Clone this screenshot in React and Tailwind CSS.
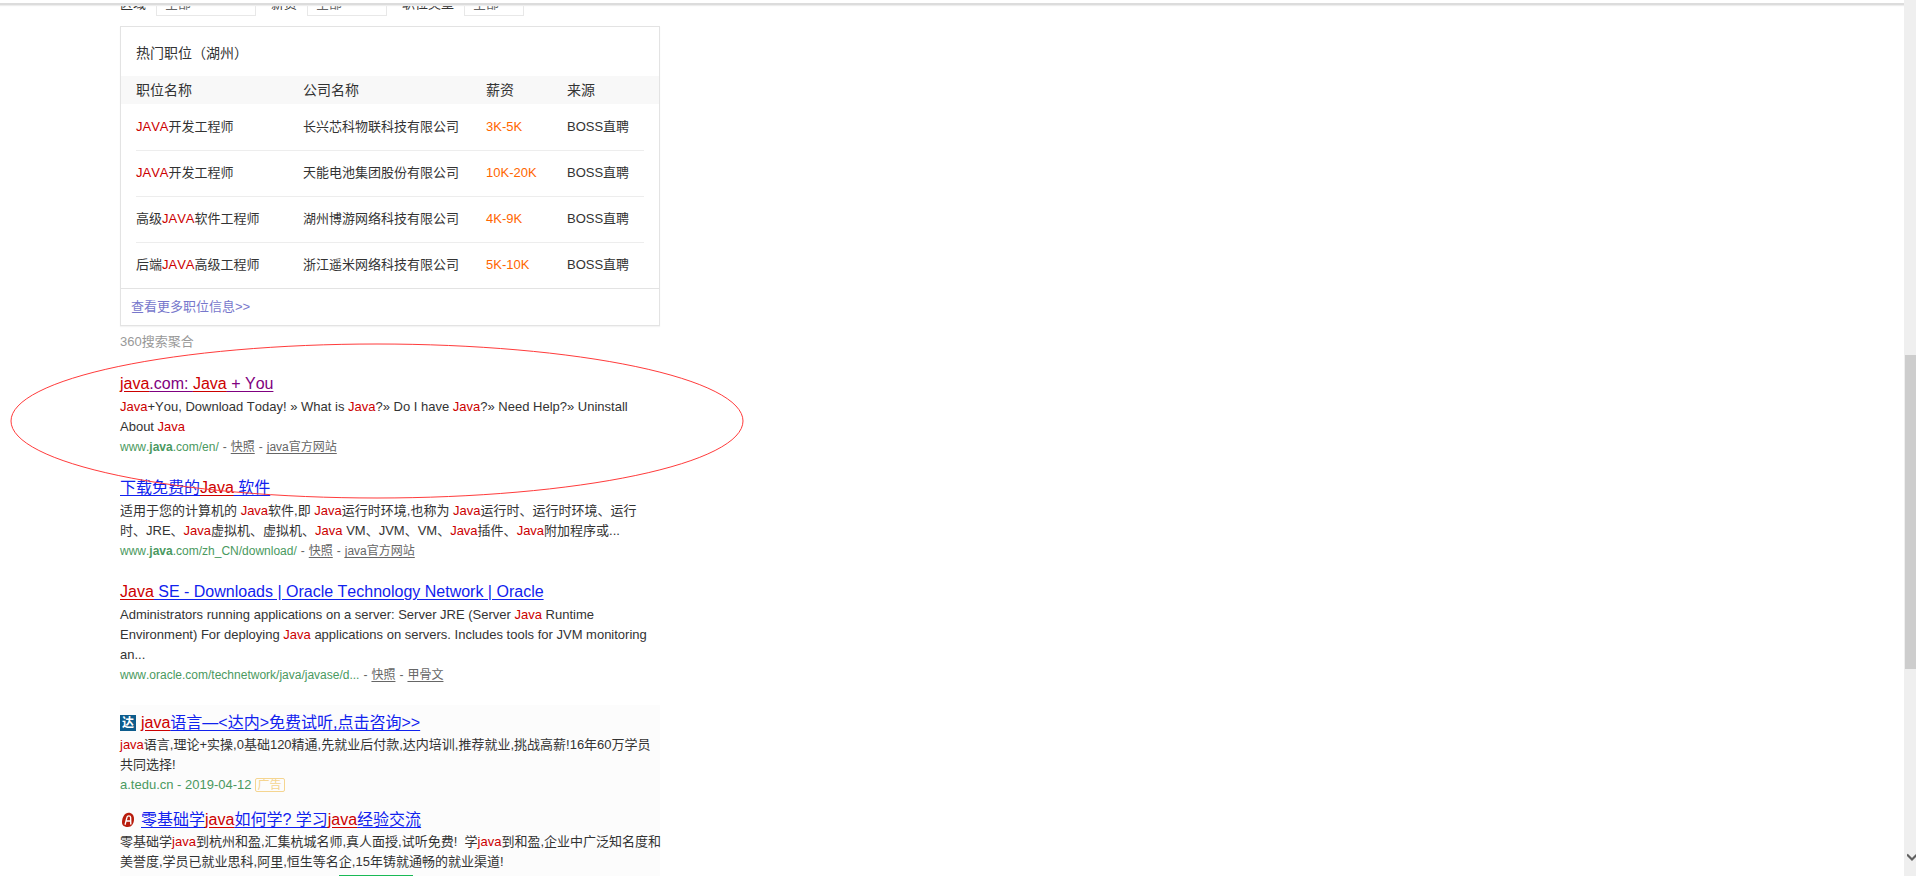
const JOBS = [
  { title: ['', 'JAVA', '开发工程师'], company: '长兴芯科物联科技有限公司', salary: '3K-5K' },
  { title: ['', 'JAVA', '开发工程师'], company: '天能电池集团股份有限公司', salary: '10K-20K' },
  { title: ['高级', 'JAVA', '软件工程师'], company: '湖州博游网络科技有限公司', salary: '4K-9K' },
  { title: ['后端', 'JAVA', '高级工程师'], company: '浙江遥米网络科技有限公司', salary: '5K-10K' },
];

function Hit({ children }) {
  return <em className="text-[#cc0000] not-italic">{children}</em>;
}

function TitleHit({ children }) {
  return <em className="text-[#cc0000] not-italic underline underline-offset-2">{children}</em>;
}

function Filter({ id, label, width, gap }) {
  return (
    <div className={`flex items-center ${gap}`}>
      <label htmlFor={id} className="shrink-0 pr-2.5">{label}</label>
      <div className={`relative ${width}`}>
        <select
          id={id}
          className="block h-6 w-full appearance-none border border-[#e8e8e8] bg-white pl-2 leading-5 text-[#666] outline-none"
        >
          <option>全部</option>
        </select>
        <svg className="pointer-events-none absolute top-2.5 right-2" width="6" height="4" viewBox="0 0 6 4" aria-hidden="true">
          <path d="M0 0h6L3 4z" fill="#b5b5b5" />
        </svg>
      </div>
    </div>
  );
}

function JobCard() {
  return (
    <section className="mt-2.5 border border-[#e3e3e3] shadow-[0_1px_1px_#f4f4f4]">
      <h2 className="h-[49px] pt-1 pl-[15px] text-sm leading-11">热门职位（湖州）</h2>
      <table className="w-full table-fixed border-collapse text-left">
        <colgroup>
          <col className="w-[15px]" />
          <col className="w-[167px]" />
          <col className="w-[183px]" />
          <col className="w-[81px]" />
          <col />
          <col className="w-[15px]" />
        </colgroup>
        <thead>
          <tr className="h-7 bg-[#f8f8f8] text-sm">
            <td />
            <th className="font-normal">职位名称</th>
            <th className="font-normal">公司名称</th>
            <th className="font-normal">薪资</th>
            <th className="font-normal">来源</th>
            <td />
          </tr>
        </thead>
        <tbody>
          {JOBS.map((job, i) => {
            const line = i < JOBS.length - 1 ? 'border-b border-[#ededed]' : '';
            return (
              <tr key={job.company} className="h-[46px]">
                <td />
                <td className={line}>
                  {job.title[0]}
                  <Hit>{job.title[1]}</Hit>
                  {job.title[2]}
                </td>
                <td className={line}>{job.company}</td>
                <td className={`text-[#ff6600] ${line}`}>{job.salary}</td>
                <td className={line}>BOSS直聘</td>
                <td />
              </tr>
            );
          })}
        </tbody>
      </table>
      <div className="border-t border-[#e3e3e3] pl-2.5 leading-9">
        <a href="#more" className="text-[#7777cc]">查看更多职位信息&gt;&gt;</a>
      </div>
    </section>
  );
}

function Result({ visited, title, children, url, site }) {
  return (
    <article className="mb-5">
      <h3 className="pb-0.5 text-base leading-[22px]">
        <a
          href="#result"
          className={`underline underline-offset-2 ${visited ? 'text-[#800080]' : 'text-[#1122ee]'}`}
        >
          {title}
        </a>
      </h3>
      <p>{children}</p>
      <p className="flex gap-1 text-xs leading-5 text-[#666]">
        <cite className="text-[#4a9960] not-italic">{url}</cite>
        <span>-</span>
        <a href="#cache" className="underline underline-offset-2">快照</a>
        <span>-</span>
        <a href="#site" className="underline underline-offset-2">{site}</a>
      </p>
    </article>
  );
}

function TeduLogo() {
  return (
    <span className="flex size-4 shrink-0 items-center justify-center bg-[#0d5c8c] text-xs leading-4 font-bold text-white">
      达
    </span>
  );
}

function AcademyLogo() {
  return (
    <svg className="size-4 shrink-0" viewBox="0 0 16 16" aria-hidden="true">
      <path d="M8.5 .8C12 .8 14 3.3 14 7c0 4.600-2.400 8-6.200 8C4.500 15 2 13.700 2 10.300 2 5 5 .8 8.500 .8z" fill="#b81c0c" />
      <path d="M5.200 12.200L7 5.200c.4-1.800 3.500-1.800 3.600 0l.2 6.800M6 9h4.600" fill="none" stroke="#fff" strokeWidth="1.400" strokeLinecap="round" />
    </svg>
  );
}

function Ad({ icon, title, children }) {
  return (
    <article className="mb-[13px]">
      <h3 className="flex items-center gap-[5px] text-base leading-6">
        {icon}
        <a href="#ad" className="text-[#1122ee] underline underline-offset-2">{title}</a>
      </h3>
      {children}
    </article>
  );
}

function Scrollbar() {
  return (
    <div className="relative flex w-3 shrink-0 flex-col overflow-hidden bg-[#efefef] pl-px" aria-hidden="true">
      <div className="grow-[355]" />
      <div className="grow-[314] bg-[#cdcdcd]" />
      <div className="grow-[207]" />
      <svg className="absolute bottom-3.5 left-[3px]" width="10" height="9" viewBox="0 0 10 9">
        <path d="M0 1.500L5 6.500L10 1.500" fill="none" stroke="#606060" strokeWidth="2.200" />
      </svg>
    </div>
  );
}

export default function App() {
  return (
    <div className="flex h-screen overflow-hidden bg-white font-['Liberation_Sans','Noto_Sans_CJK_SC',sans-serif] text-[13px] leading-5 text-[#333] [font-kerning:none]">
      <div className="relative min-w-0 flex-1 overflow-hidden">
        <header className="relative z-10 h-[5px] border-b-2 border-[#dcdcdc] bg-white shadow-[0_1px_1px_#ededed]" />
        <main className="ml-[120px] w-[540px]">
          <form className="-mt-[13px] flex h-6">
            <Filter id="area" label="区域" width="w-[100px]" gap="" />
            <Filter id="salary" label="薪资" width="w-[80px]" gap="ml-[15px]" />
            <Filter id="type" label="职位类型" width="w-[60px]" gap="ml-[15px]" />
          </form>
          <JobCard />
          <p className="mt-1.5 mb-[21px] text-[#999]">360搜索聚合</p>

          <Result
            visited
            title={<><TitleHit>java</TitleHit>.com: <TitleHit>Java</TitleHit> + You</>}
            url={<>www.<b>java</b>.com/en/</>}
            site="java官方网站"
          >
            <Hit>Java</Hit>+You, Download Today! » What is <Hit>Java</Hit>?» Do I have <Hit>Java</Hit>?» Need Help?» Uninstall
            <br />
            About <Hit>Java</Hit>
          </Result>

          <Result
            title={<>下载免费的<TitleHit>Java</TitleHit> 软件</>}
            url={<>www.<b>java</b>.com/zh_CN/download/</>}
            site="java官方网站"
          >
            适用于您的计算机的 <Hit>Java</Hit>软件,即 <Hit>Java</Hit>运行时环境,也称为 <Hit>Java</Hit>运行时、运行时环境、运行
            <br />
            时、JRE、<Hit>Java</Hit>虚拟机、虚拟机、<Hit>Java</Hit> VM、JVM、VM、<Hit>Java</Hit>插件、<Hit>Java</Hit>附加程序或...
          </Result>

          <Result
            title={<><TitleHit>Java</TitleHit> SE - Downloads | Oracle Technology Network | Oracle</>}
            url="www.oracle.com/technetwork/java/javase/d..."
            site="甲骨文"
          >
            Administrators running applications on a server: Server JRE (Server <Hit>Java</Hit> Runtime
            <br />
            Environment) For deploying <Hit>Java</Hit> applications on servers. Includes tools for JVM monitoring
            <br />
            an...
          </Result>

          <section className="bg-[#fcfcfc] pt-1.5 whitespace-nowrap">
            <Ad
              icon={<TeduLogo />}
              title={<><TitleHit>java</TitleHit>语言—&lt;达内&gt;免费试听,点击咨询&gt;&gt;</>}
            >
              <p>
                <Hit>java</Hit>语言,理论+实操,0基础120精通,先就业后付款,达内培训,推荐就业,挑战高薪!16年60万学员
                <br />
                共同选择!
              </p>
              <p className="flex items-center gap-[3px] text-[#4a9960]">
                a.tedu.cn - 2019-04-12
                <span className="rounded-xs border border-[#f5d590] px-0.5 text-xs leading-3 text-[#f5d590]">广告</span>
              </p>
            </Ad>
            <Ad
              icon={<AcademyLogo />}
              title={<>零基础学<TitleHit>java</TitleHit>如何学? 学习<TitleHit>java</TitleHit>经验交流</>}
            >
              <p>
                零基础学<Hit>java</Hit>到杭州和盈,汇集杭城名师,真人面授,试听免费!&nbsp; 学<Hit>java</Hit>到和盈,企业中广泛知名度和
                <br />
                美誉度,学员已就业思科,阿里,恒生等名企,15年铸就通畅的就业渠道!
              </p>
              <div className="mt-[3px] ml-[219px] h-5 w-[74px] bg-[#19b955]" />
            </Ad>
          </section>
        </main>

        <svg
          className="pointer-events-none absolute top-[343px] left-[10px]"
          width="734"
          height="156"
          viewBox="0 0 734 156"
          fill="none"
          aria-hidden="true"
        >
          <ellipse cx="367" cy="78" rx="366" ry="77" stroke="#ff3b3b" />
        </svg>
      </div>
      <Scrollbar />
    </div>
  );
}
